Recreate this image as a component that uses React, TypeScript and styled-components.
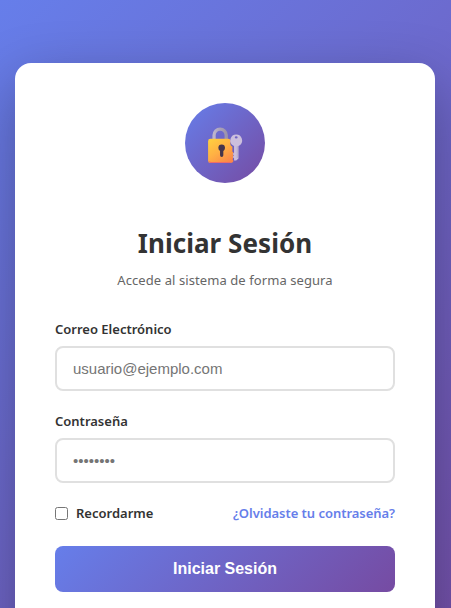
import React from "react";
import styled, { createGlobalStyle } from "styled-components";

const GlobalStyle = createGlobalStyle`
  * { box-sizing: border-box; margin: 0; padding: 0; }
  html, body { height: 100%; overflow: hidden; }
  body { font-family: "Segoe UI", "Noto Sans", "Open Sans", sans-serif; }
`;

const Page = styled.div`
  height: 608px;
  overflow: hidden;
  background: linear-gradient(135deg, #667eea 0%, #764ba2 100%) 0 0 / 100% 769px no-repeat;
  padding: 63px 16px 0 15px;
`;

const Card = styled.main`
  width: 100%;
  max-width: 420px;
  height: 643px;
  margin: 0 auto;
  padding: 40px;
  background: #fff;
  border-radius: 16px;
  box-shadow: 0 20px 60px rgba(0, 0, 0, 0.3);
`;

const Header = styled.header`
  display: flex;
  flex-direction: column;
  align-items: center;
  height: 216px;
`;

const Logo = styled.div`
  display: flex;
  align-items: center;
  justify-content: center;
  width: 80px;
  height: 80px;
  flex: none;
  margin-bottom: 40px;
  border-radius: 50%;
  background: linear-gradient(135deg, #667eea 0%, #764ba2 100%);
`;

const Title = styled.h1`
  font-size: 26px;
  font-weight: 700;
  line-height: 40px;
  letter-spacing: 0.05px;
  color: #333;
  white-space: nowrap;
`;

const Subtitle = styled.p`
  margin-top: 7px;
  font-size: 13px;
  line-height: 20px;
  letter-spacing: 0.08px;
  color: #666;
  white-space: nowrap;
`;

const Field = styled.div`
  display: flex;
  flex-direction: column;
  gap: 7px;
  margin-bottom: 20px;
`;

const Label = styled.label`
  font-size: 13px;
  font-weight: 600;
  line-height: 20px;
  color: #333;
  white-space: nowrap;
`;

const Input = styled.input`
  width: 100%;
  height: 45px;
  padding: 0 16px;
  border: 2px solid #e0e0e0;
  border-radius: 8px;
  background: #fff;
  font-family: "Liberation Sans", Arial, sans-serif;
  font-size: 15px;
  outline: none;
  &::placeholder { color: #757575; }
`;

const Options = styled.div`
  display: flex;
  align-items: center;
  justify-content: space-between;
  height: 20px;
  margin-bottom: 23px;
`;

const Remember = styled.label`
  display: flex;
  align-items: center;
  gap: 8px;
  font-size: 13px;
  font-weight: 600;
  line-height: 20px;
  color: #333;
  input { width: 13px; height: 13px; }
`;

const Forgot = styled.a`
  font-size: 13px;
  font-weight: 600;
  line-height: 20px;
  letter-spacing: -0.04px;
  color: #667eea;
  text-decoration: none;
  white-space: nowrap;
`;

const Submit = styled.button`
  display: block;
  width: 100%;
  height: 46px;
  border: 0;
  border-radius: 8px;
  background: linear-gradient(135deg, #667eea 0%, #764ba2 100%);
  color: #fff;
  font: 600 16px "Liberation Sans", Arial, sans-serif;
`;

const LockIcon = () => (
  <svg width="40" height="42" viewBox="0 0 40 42" aria-hidden="true">
    <defs>
      <linearGradient id="body" x1="0.1" y1="0" x2="0.8" y2="1">
        <stop offset="0" stopColor="#ffcf3f" />
        <stop offset="0.5" stopColor="#ffb044" />
        <stop offset="1" stopColor="#fb8548" />
      </linearGradient>
      <linearGradient id="shackle" x1="0" y1="0" x2="1" y2="0">
        <stop offset="0" stopColor="#bdb5cc" />
        <stop offset="0.5" stopColor="#aaa1b9" />
        <stop offset="1" stopColor="#9d94aa" />
      </linearGradient>
    </defs>
    <g transform="translate(0 3.2) scale(1.03 1.05)">
      <path d="M8.8 16V9.6a5.9 5.9 0 0 1 11.8 0V16" fill="none" stroke="url(#shackle)" strokeWidth="3.2" />
      <path d="M3 15.2q0-2.2 2.2-2.2h17.3q2 0 2.5 2c-.8 2.4-.6 4.5 1.6 5.5v4.7q2 .8.3 2.4 1.7 1.2 0 2.4 1 1.4-.1 2.4l.9 1.8q-.8 1.8-2.7 1.8H5.2Q3 36 3 33.8z" fill="url(#body)" />
      <path d="M4 34.5q.6 1 2 1h19" fill="none" stroke="#ee6d67" strokeWidth="1" />
      <circle cx="16.2" cy="21.5" r="3.2" fill="#46354b" />
      <path d="M14.6 22.5h3.2v6.2a1.6 1.6 0 0 1-3.2 0z" fill="#46354b" />
      <g transform="translate(-.7 0)">
        <path fillRule="evenodd" d="M31 8.8a5.7 5.7 0 0 1 3.1 10.5l-.9.6v11.7L31 33.6h-2.1v-2.1l-1.4-1.2 1.4-1.4-1.4-1.4 1.4-1.3v-6.3l-1-.6A5.7 5.7 0 0 1 31 8.8zm0 1.7a1.4 1.1 0 1 0 0 2.2 1.4 1.1 0 0 0 0-2.2z" fill="#ccbfdd" />
        <path d="M32 20v11.3" stroke="#aa9bbd" strokeWidth=".6" />
      </g>
    </g>
  </svg>
);

export default function App() {
  return (
    <>
      <GlobalStyle />
      <Page>
        <Card>
          <Header>
            <Logo><LockIcon /></Logo>
            <Title>Iniciar Sesión</Title>
            <Subtitle>Accede al sistema de forma segura</Subtitle>
          </Header>
          <form onSubmit={(e) => e.preventDefault()}>
            <Field>
              <Label htmlFor="email">Correo Electrónico</Label>
              <Input id="email" type="email" placeholder="usuario@ejemplo.com" />
            </Field>
            <Field>
              <Label htmlFor="password">Contraseña</Label>
              <Input id="password" type="password" placeholder="••••••••" />
            </Field>
            <Options>
              <Remember><input type="checkbox" />Recordarme</Remember>
              <Forgot href="#">¿Olvidaste tu contraseña?</Forgot>
            </Options>
            <Submit type="submit">Iniciar Sesión</Submit>
          </form>
        </Card>
      </Page>
    </>
  );
}
